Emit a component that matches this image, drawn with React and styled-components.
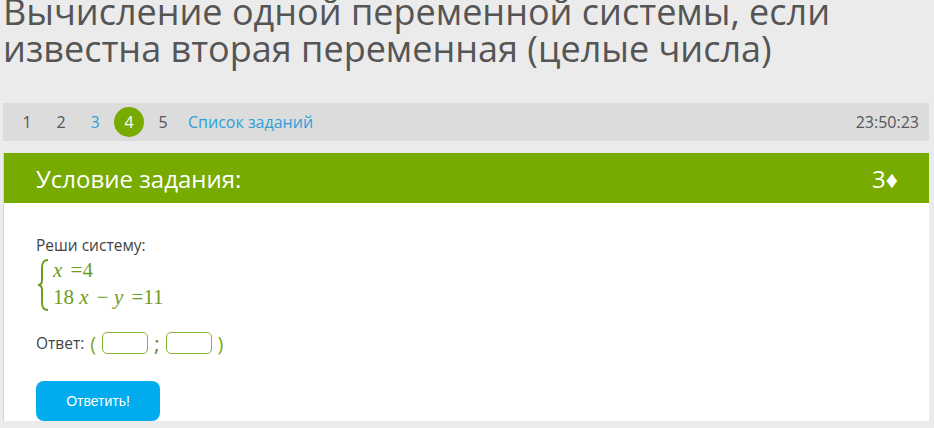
import React from "react";
import styled, { createGlobalStyle } from "styled-components";

const GlobalStyle = createGlobalStyle`
  html, body {
    margin: 0;
    padding: 0;
    background: #ebebeb;
    font-family: "Open Sans", "Liberation Sans", sans-serif;
    overflow: hidden;
  }
`;

const Page = styled.div`
  width: 934px;
  height: 428px;
  padding: 0 5px 0 3px;
  box-sizing: border-box;
`;

const Title = styled.h1`
  margin: -7px 0 0 0;
  font-size: 36px;
  font-weight: 400;
  line-height: 37px;
  color: #555;
  height: 110px;
`;

const NavBar = styled.div`
  display: flex;
  align-items: center;
  height: 38px;
  background: #dcdcdc;
  padding: 0 10px 0 7px;
  font-size: 16px;
`;

const NavItem = styled.span`
  width: 34px;
  text-align: center;
  color: ${(p) => (p.$done ? "#2d9fd9" : "#555")};
`;

const Current = styled.span`
  width: 30px;
  height: 30px;
  margin: 0 2px;
  border-radius: 50%;
  background: #77ab00;
  color: #fff;
  display: flex;
  align-items: center;
  justify-content: center;
`;

const TaskLink = styled.a`
  margin-left: 8px;
  color: #2d9fd9;
  text-decoration: none;
`;

const Timer = styled.span`
  margin-left: auto;
  color: #555;
`;

const Card = styled.div`
  margin-top: 12px;
  background: #fff;
  border-left: 1px solid #d4d4d4;
`;

const CardHead = styled.div`
  display: flex;
  align-items: center;
  justify-content: space-between;
  height: 50px;
  background: #77ab00;
  color: #fff;
  font-size: 24px;
  padding: 0 31px 0 32px;
`;

const CardBody = styled.div`
  padding: 32px 32px 20px;
  color: #444;
  font-size: 15.5px;
  line-height: 21px;
`;

const System = styled.div`
  display: flex;
  align-items: stretch;
  margin-top: 3px;
  color: #6b9d1f;
  font-family: "Liberation Serif", "DejaVu Serif", serif;
  font-size: 21px;
`;

const Brace = styled.svg`
  width: 14px;
  height: 52px;
  flex: none;
`;

const Lines = styled.div`
  display: flex;
  flex-direction: column;
  line-height: 27px;
  margin-left: 3px;
  margin-top: -2px;
`;

const Var = styled.i`
  font-style: italic;
  margin: 0 3px 0 0;
`;

const AnswerRow = styled.div`
  display: flex;
  align-items: center;
  margin-top: 21px;
  gap: 4px;
`;

const Paren = styled.span`
  color: ${(p) => (p.$sep ? "#5a7d1c" : "#7cab1a")};
  font-size: 20px;
  margin: 0 2px;
`;

const Input = styled.input`
  width: 44px;
  height: 20px;
  box-sizing: content-box;
  padding: 0;
  border: 1px solid #8ab53a;
  border-radius: 5px;
  outline: none;
`;

const Button = styled.button`
  margin-top: 27px;
  width: 124px;
  height: 40px;
  border: none;
  border-radius: 8px;
  background: #00aced;
  color: #fff;
  font-family: "Liberation Sans", Arial, sans-serif;
  font-size: 14px;
`;

export default function App() {
  return (
    <Page>
      <GlobalStyle />
      <Title>
        Вычисление одной переменной системы, если известна вторая переменная
        (целые числа)
      </Title>
      <NavBar>
        <NavItem>1</NavItem>
        <NavItem>2</NavItem>
        <NavItem $done>3</NavItem>
        <Current>4</Current>
        <NavItem>5</NavItem>
        <TaskLink href="#">Список заданий</TaskLink>
        <Timer>23:50:23</Timer>
      </NavBar>
      <Card>
        <CardHead>
          <span>Условие задания:</span>
          <span>3♦</span>
        </CardHead>
        <CardBody>
          <div>Реши систему:</div>
          <System>
            <Brace viewBox="0 0 14 52">
              <path
                d="M12 1 C7 1 6 4 6 9 L6 21 C6 24 5 26 2 26 C5 26 6 28 6 31 L6 43 C6 48 7 51 12 51"
                fill="none"
                stroke="#6b9d1f"
                strokeWidth="2"
              />
            </Brace>
            <Lines>
              <span>
                <Var>x</Var> =4
              </span>
              <span>
                18 <Var>x</Var> − <Var>y</Var> =11
              </span>
            </Lines>
          </System>
          <AnswerRow>
            Ответ:
            <Paren>(</Paren>
            <Input />
            <Paren $sep>;</Paren>
            <Input />
            <Paren>)</Paren>
          </AnswerRow>
          <Button>Ответить!</Button>
        </CardBody>
      </Card>
    </Page>
  );
}
